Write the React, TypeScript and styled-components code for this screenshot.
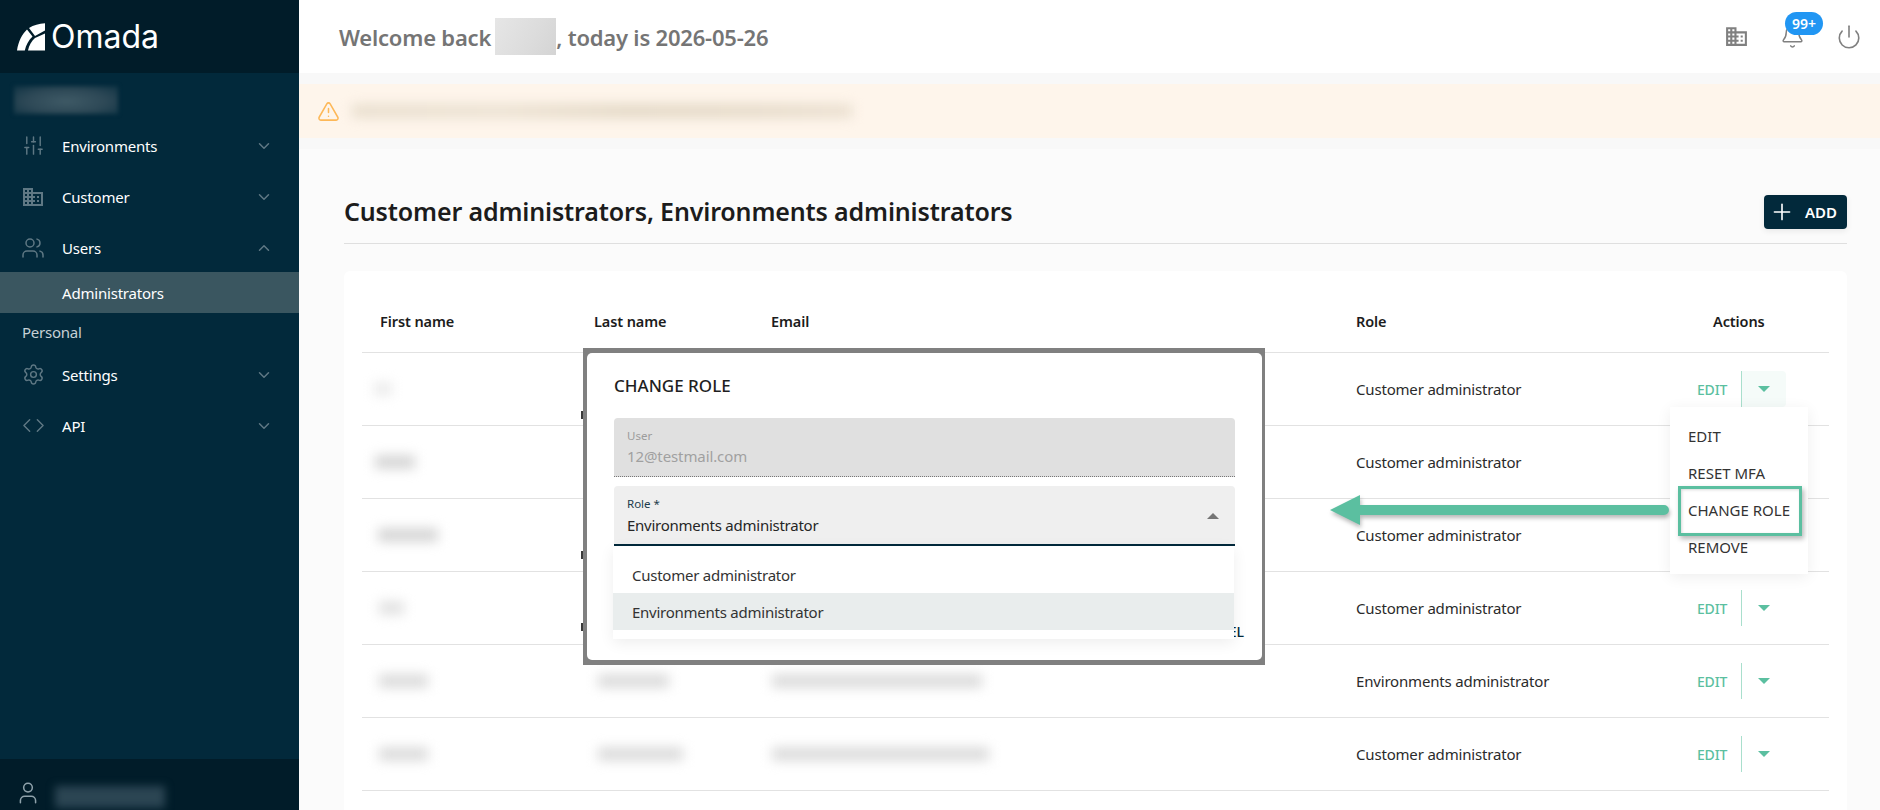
import React from "react";
import styled, { createGlobalStyle } from "styled-components";
import {
  Bell,
  ChevronDown,
  ChevronUp,
  Code,
  Plus,
  Power,
  Settings,
  SlidersVertical,
  TriangleAlert,
  User,
  Users,
} from "lucide-react";
import { MdBusiness } from "react-icons/md";

const FONT = `"Noto Sans", "Open Sans", sans-serif`;
const GREEN = "#5bbfa0";
const NAVY = "#02293b";
const DARK = "#011c29";

const GlobalStyle = createGlobalStyle`
  html, body {
    margin: 0;
    padding: 0;
    width: 1880px;
    height: 810px;
    overflow: hidden;
    background: #fff;
    font-family: ${FONT};
  }
  * { box-sizing: border-box; }
`;

// rows 2 and 3 sit under the open action menu, so their buttons are left out
const rows = [
  { first: 18, firstAt: -6, tone: "#ececec", last: 0, email: 0, role: "Customer administrator", actions: true },
  { first: 40, firstAt: -5, tone: "#d6d6d6", last: 0, email: 0, role: "Customer administrator", actions: false },
  { first: 60, firstAt: -2, tone: "#d6d6d6", last: 0, email: 0, role: "Customer administrator", actions: false },
  { first: 25, firstAt: -1, tone: "#e2e2e2", last: 0, email: 0, role: "Customer administrator", actions: true },
  { first: 49, firstAt: -1, tone: "#dcdcdc", last: 71, email: 210, role: "Environments administrator", actions: true },
  { first: 49, firstAt: -1, tone: "#dcdcdc", last: 85, email: 217, role: "Customer administrator", actions: true },
];

const slivers = [415, 555, 627];

export default function App() {
  return (
    <Page>
      <GlobalStyle />
      <Sidebar>
        <Brand>
          <LogoMark viewBox="0 0 28 28" aria-hidden>
            <path d="M0 27.5C1.5 18 5 11.5 10 6.5L15.5 13.5C11.5 17.5 9 22 7.8 27.5Z" fill="#fff" />
            <path d="M12 5C16.5 2.2 22 .6 28 .3V7.5L18 13Z" fill="#fff" />
            <path d="M28 10.5V27.5H11C12 22.5 14.5 18 18 15Z" fill="#fff" />
          </LogoMark>
          <LogoText>Omada</LogoText>
        </Brand>
        <Nav>
          <TenantBlur />
          <NavItem>
            <NavIcon><SlidersVertical size={23} strokeWidth={1.5} /></NavIcon>
            <NavLabel>Environments</NavLabel>
            <NavChevron><ChevronDown size={18} /></NavChevron>
          </NavItem>
          <NavItem>
            <NavIcon><MdBusiness size={24} /></NavIcon>
            <NavLabel>Customer</NavLabel>
            <NavChevron><ChevronDown size={18} /></NavChevron>
          </NavItem>
          <NavItem>
            <NavIcon><Users size={24} strokeWidth={1.5} /></NavIcon>
            <NavLabel>Users</NavLabel>
            <NavChevron><ChevronUp size={18} /></NavChevron>
          </NavItem>
          <SubItem>Administrators</SubItem>
          <NavHeading>Personal</NavHeading>
          <NavItem>
            <NavIcon><Settings size={23} strokeWidth={1.5} /></NavIcon>
            <NavLabel>Settings</NavLabel>
            <NavChevron><ChevronDown size={18} /></NavChevron>
          </NavItem>
          <NavItem>
            <NavIcon><Code size={23} strokeWidth={1.5} /></NavIcon>
            <NavLabel>API</NavLabel>
            <NavChevron><ChevronDown size={18} /></NavChevron>
          </NavItem>
        </Nav>
        <SideFooter>
          <User size={26} strokeWidth={1.4} color="#8fa2ab" />
          <FooterBlur />
        </SideFooter>
      </Sidebar>

      <Main>
        <TopBar>
          <Welcome>
            Welcome back
            <NameBlur />, today is 2026-05-26
          </Welcome>
          <TopActions>
            <MdBusiness size={25} color="#808080" />
            <BellWrap>
              <Bell size={25} strokeWidth={1.4} color="#808080" />
              <Badge>99+</Badge>
            </BellWrap>
            <Power size={26} strokeWidth={1.5} color="#808080" />
          </TopActions>
        </TopBar>

        <Alert>
          <TriangleAlert size={23} strokeWidth={1.6} color="#fdb858" />
          <AlertBlur />
        </Alert>

        <Content>
          <TitleRow>
            <Title>Customer administrators, Environments administrators</Title>
            <AddButton>
              <Plus size={26} strokeWidth={1.5} />
              ADD
            </AddButton>
          </TitleRow>

          <Card>
            <HeadRow>
              <HeadCell>First name</HeadCell>
              <HeadCell>Last name</HeadCell>
              <HeadCell>Email</HeadCell>
              <HeadCell>Role</HeadCell>
              <ActionsHead>Actions</ActionsHead>
            </HeadRow>
            {rows.map((row, i) => (
              <Row key={i}>
                <Cell><Smudge $w={row.first} $at={row.firstAt} $tone={row.tone} /></Cell>
                <Cell>{row.last > 0 && <Smudge $w={row.last} $at={4} $tone={row.tone} />}</Cell>
                <Cell>{row.email > 0 && <Smudge $w={row.email} $at={1} $tone={row.tone} />}</Cell>
                <Cell>{row.role}</Cell>
                {row.actions && (
                  <ActionCell>
                    <EditLabel>EDIT</EditLabel>
                    <CaretButton $open={i === 0}>
                      <Caret $color={GREEN} />
                    </CaretButton>
                  </ActionCell>
                )}
              </Row>
            ))}
          </Card>
        </Content>
      </Main>

      {slivers.map((top) => (
        <Sliver key={top} $top={top} />
      ))}

      <Modal>
        <ModalBody>
          <ModalTitle>CHANGE ROLE</ModalTitle>
          <DisabledField>
            <FieldLabel>User</FieldLabel>
            <FieldValue>12@testmail.com</FieldValue>
          </DisabledField>
          <RoleField>
            <RoleLabel>Role *</RoleLabel>
            <RoleValue>Environments administrator</RoleValue>
            <RoleCaret $color="#757575" $up />
          </RoleField>
          <ModalFooter>CANCEL</ModalFooter>
          <Options>
            <Option>Customer administrator</Option>
            <Option $selected>Environments administrator</Option>
          </Options>
        </ModalBody>
      </Modal>

      <RowMenu>
        <MenuItem>EDIT</MenuItem>
        <MenuItem>RESET MFA</MenuItem>
        <MenuItem>CHANGE ROLE</MenuItem>
        <MenuItem>REMOVE</MenuItem>
      </RowMenu>
      <Highlight />
      <Pointer viewBox="0 0 340 34" aria-hidden>
        <path d="M0 16 L30 1 V11 H334 a5 5 0 0 1 0 10 H30 V31 Z" fill={GREEN} />
      </Pointer>
    </Page>
  );
}

const Page = styled.div`
  position: relative;
  display: flex;
  width: 1880px;
  height: 810px;
  overflow: hidden;
  font-family: ${FONT};
`;

const Sidebar = styled.aside`
  display: flex;
  flex-direction: column;
  flex: 0 0 299px;
  background: ${NAVY};
`;

const Brand = styled.div`
  display: flex;
  align-items: center;
  gap: 6px;
  height: 73px;
  padding: 0 0 0 17px;
  background: ${DARK};
`;

const LogoMark = styled.svg`
  width: 28px;
  height: 28px;
  margin-top: 1px;
`;

const LogoText = styled.span`
  font-family: Inter, sans-serif;
  font-size: 32px;
  font-weight: 400;
  color: #fff;
`;

const Nav = styled.nav`
  display: flex;
  flex-direction: column;
  flex: 1;
`;

const TenantBlur = styled.div`
  width: 104px;
  height: 28px;
  margin: 13px 0 6px 14px;
  background: radial-gradient(ellipse at 50% 55%, #3f5a66 0%, #2d4856 55%, #0f3344 100%);
  filter: blur(2px);
`;

const NavItem = styled.div`
  display: flex;
  align-items: center;
  height: 51px;
  padding: 0 26px 0 21px;
  color: #fff;
  font-size: 15px;
`;

const NavIcon = styled.span`
  display: flex;
  justify-content: center;
  width: 24px;
  margin-right: 17px;
  color: #5f7884;
`;

const NavLabel = styled.span`
  flex: 1;
  letter-spacing: -0.2px;
`;

const NavChevron = styled.span`
  display: flex;
  color: #5f7884;
`;

const SubItem = styled.div`
  display: flex;
  align-items: center;
  height: 41px;
  margin-top: -1px;
  padding-left: 62px;
  background: #3a5660;
  color: #fff;
  font-size: 15px;
  letter-spacing: -0.2px;
`;

const NavHeading = styled.div`
  padding: 8px 0 6px 22px;
  color: #c6d0d5;
  font-size: 15px;
  line-height: 22px;
  letter-spacing: -0.25px;
`;

const SideFooter = styled.div`
  display: flex;
  align-items: flex-end;
  gap: 14px;
  height: 51px;
  padding: 0 0 4px 15px;
  overflow: hidden;
  background: ${DARK};
`;

const FooterBlur = styled.div`
  width: 110px;
  height: 22px;
  margin-bottom: -2px;
  background: #2b4553;
  filter: blur(4px);
`;

const Main = styled.main`
  display: flex;
  flex-direction: column;
  flex: 1;
  min-width: 0;
  background: #f8f8f8;
`;

const TopBar = styled.header`
  display: flex;
  align-items: center;
  justify-content: space-between;
  height: 73px;
  padding: 0 18px 0 40px;
  background: #fff;
`;

const Welcome = styled.div`
  display: flex;
  align-items: center;
  color: #757575;
  font-size: 22px;
  font-weight: 600;
  letter-spacing: -0.2px;
`;

const NameBlur = styled.span`
  width: 61px;
  height: 37px;
  margin-left: 4px;
  background: linear-gradient(120deg, #e6e6e6, #dcdcdc 60%, #d4d4d4);
`;

const TopActions = styled.div`
  display: flex;
  align-items: center;
  gap: 31px;
`;

const BellWrap = styled.span`
  position: relative;
  display: flex;
`;

const Badge = styled.span`
  position: absolute;
  top: -12px;
  left: 5px;
  display: flex;
  align-items: center;
  justify-content: center;
  width: 38px;
  height: 23px;
  border-radius: 12px;
  background: #2196f3;
  color: #fff;
  font-size: 14px;
  font-weight: 600;
`;

const Alert = styled.div`
  display: flex;
  align-items: center;
  gap: 12px;
  height: 54px;
  margin-top: 11px;
  padding-left: 18px;
  background: #fef5eb;
`;

const AlertBlur = styled.div`
  width: 500px;
  height: 14px;
  background: linear-gradient(90deg, #e9dfcf, #ece2d3 30%, #e4d9c7 55%, #e6dbca 80%, #ebe0d1);
  filter: blur(6px);
`;

const Content = styled.div`
  display: flex;
  flex-direction: column;
  flex: 1;
  margin-top: 11px;
  padding: 0 33px 0 45px;
  background: #fbfbfb;
`;

const TitleRow = styled.div`
  display: flex;
  align-items: flex-end;
  justify-content: space-between;
  height: 95px;
  padding-bottom: 14px;
  border-bottom: 1px solid #dfdfdf;
`;

const Title = styled.h1`
  margin: 0 0 1px;
  color: #1c1c1c;
  font-size: 25px;
  font-weight: 600;
  line-height: 34px;
  letter-spacing: -0.15px;
`;

const AddButton = styled.button`
  display: flex;
  align-items: center;
  gap: 10px;
  width: 83px;
  height: 34px;
  padding: 0 0 0 5px;
  border: 0;
  border-radius: 4px;
  background: ${NAVY};
  box-shadow: 0 2px 6px rgba(0, 0, 0, 0.08);
  color: #fff;
  font-family: ${FONT};
  font-size: 15px;
  font-weight: 600;
`;

const Card = styled.section`
  flex: 1;
  margin-top: 27px;
  padding: 0 18px;
  border-radius: 6px 6px 0 0;
  background: #fff;
`;

const HeadRow = styled.div`
  display: grid;
  grid-template-columns: 214px 177px 585px 342px 1fr;
  align-items: center;
  height: 82px;
  padding: 18px 0 0 18px;
  border-bottom: 1px solid #e2e2e2;
`;

const HeadCell = styled.div`
  color: #1c1c1c;
  font-size: 14.5px;
  font-weight: 600;
  letter-spacing: -0.1px;
`;

const ActionsHead = styled(HeadCell)`
  padding-left: 15px;
`;

const Row = styled.div`
  display: grid;
  grid-template-columns: 214px 177px 585px 342px 1fr;
  align-items: center;
  height: 73px;
  padding-left: 18px;
  border-bottom: 1px solid #e2e2e2;
`;

const Cell = styled.div`
  justify-self: start;
  color: #2b2b2b;
  font-size: 15px;
  letter-spacing: -0.18px;
`;

const Smudge = styled.div<{ $w: number; $at: number; $tone: string }>`
  width: ${({ $w }) => $w}px;
  height: 14px;
  margin-left: ${({ $at }) => $at}px;
  background: ${({ $tone }) => $tone};
  filter: blur(6px);
`;

const ActionCell = styled.div`
  display: flex;
  align-items: center;
`;

const EditLabel = styled.span`
  width: 44px;
  margin-left: -1px;
  color: ${GREEN};
  font-size: 14px;
  font-weight: 500;
  letter-spacing: -0.2px;
`;

const CaretButton = styled.span<{ $open?: boolean }>`
  display: flex;
  align-items: center;
  justify-content: center;
  width: 45px;
  height: 36px;
  border-left: 1px solid #a9dfcd;
  border-radius: 0 4px 4px 0;
  background: ${({ $open }) => ($open ? "#f5fbf9" : "transparent")};
`;

const Caret = styled.i<{ $color: string; $up?: boolean }>`
  width: 0;
  height: 0;
  border-left: 6px solid transparent;
  border-right: 6px solid transparent;
  border-top: ${({ $up, $color }) => ($up ? "0" : `6px solid ${$color}`)};
  border-bottom: ${({ $up, $color }) => ($up ? `6px solid ${$color}` : "0")};
`;

const Sliver = styled.span<{ $top: number }>`
  position: absolute;
  top: ${({ $top }) => $top - 4}px;
  left: 581px;
  width: 3px;
  height: 8px;
  background: #3a3a3a;
`;

const Modal = styled.div`
  position: absolute;
  top: 348px;
  left: 583px;
  width: 682px;
  height: 317px;
  padding: 5px 3px 5px 4px;
  background: #808080;
`;

const ModalBody = styled.div`
  position: relative;
  display: flex;
  flex-direction: column;
  height: 100%;
  padding: 0 27px;
  border-radius: 5px;
  background: #fff;
`;

const ModalTitle = styled.h2`
  margin: 0;
  padding-top: 21px;
  height: 65px;
  color: #1f1f1f;
  font-size: 17px;
  font-weight: 500;
  line-height: 24px;
`;

const DisabledField = styled.div`
  height: 59px;
  padding: 9px 13px 0;
  border-bottom: 1px dotted #777;
  border-radius: 4px 4px 0 0;
  background: #e0e0e0;
`;

const FieldLabel = styled.div`
  color: #9c9c9c;
  font-size: 11.5px;
  line-height: 17px;
`;

const FieldValue = styled.div`
  color: #a0a0a0;
  font-size: 15px;
  line-height: 25px;
  letter-spacing: -0.1px;
`;

const RoleField = styled.div`
  position: relative;
  height: 60px;
  margin-top: 9px;
  padding: 9px 13px 0;
  border-bottom: 2px solid ${NAVY};
  border-radius: 4px 4px 0 0;
  background: #efefef;
`;

const RoleLabel = styled.div`
  color: #1d3c4c;
  font-size: 11.5px;
  line-height: 17px;
`;

const RoleValue = styled.div`
  color: #262626;
  font-size: 15px;
  line-height: 26px;
  letter-spacing: -0.25px;
`;

const RoleCaret = styled(Caret)`
  position: absolute;
  top: 27px;
  right: 16px;
  display: block;
`;

const ModalFooter = styled.div`
  margin-top: auto;
  padding: 0 0 20px;
  margin-right: -9px;
  line-height: 16px;
  text-align: right;
  color: ${NAVY};
  font-size: 14px;
  font-weight: 500;
`;

const Options = styled.div`
  position: absolute;
  top: 193px;
  left: 26px;
  width: 621px;
  padding: 10px 0 9px;
  background: #fff;
  box-shadow: 0 4px 14px rgba(0, 0, 0, 0.07);
`;

const Option = styled.div<{ $selected?: boolean }>`
  height: 37px;
  padding-left: 19px;
  background: ${({ $selected }) => ($selected ? "#e9eded" : "transparent")};
  color: #333;
  font-size: 15px;
  line-height: 38px;
  letter-spacing: -0.25px;
`;

const RowMenu = styled.div`
  position: absolute;
  top: 407px;
  left: 1670px;
  width: 138px;
  height: 167px;
  padding: 11px 0 0 18px;
  background: #fff;
  box-shadow: 0 3px 14px rgba(0, 0, 0, 0.07);
`;

const MenuItem = styled.div`
  height: 37px;
  color: #333;
  font-size: 15px;
  line-height: 37px;
`;

const Highlight = styled.div`
  position: absolute;
  top: 486px;
  left: 1678px;
  width: 124px;
  height: 50px;
  border: 3px solid ${GREEN};
  box-shadow: 2px 3px 5px rgba(0, 0, 0, 0.28), inset 1px 1px 3px rgba(0, 0, 0, 0.15);
`;

const Pointer = styled.svg`
  position: absolute;
  top: 494px;
  left: 1330px;
  width: 340px;
  height: 34px;
  filter: drop-shadow(1px 3px 2px rgba(0, 0, 0, 0.28));
`;
